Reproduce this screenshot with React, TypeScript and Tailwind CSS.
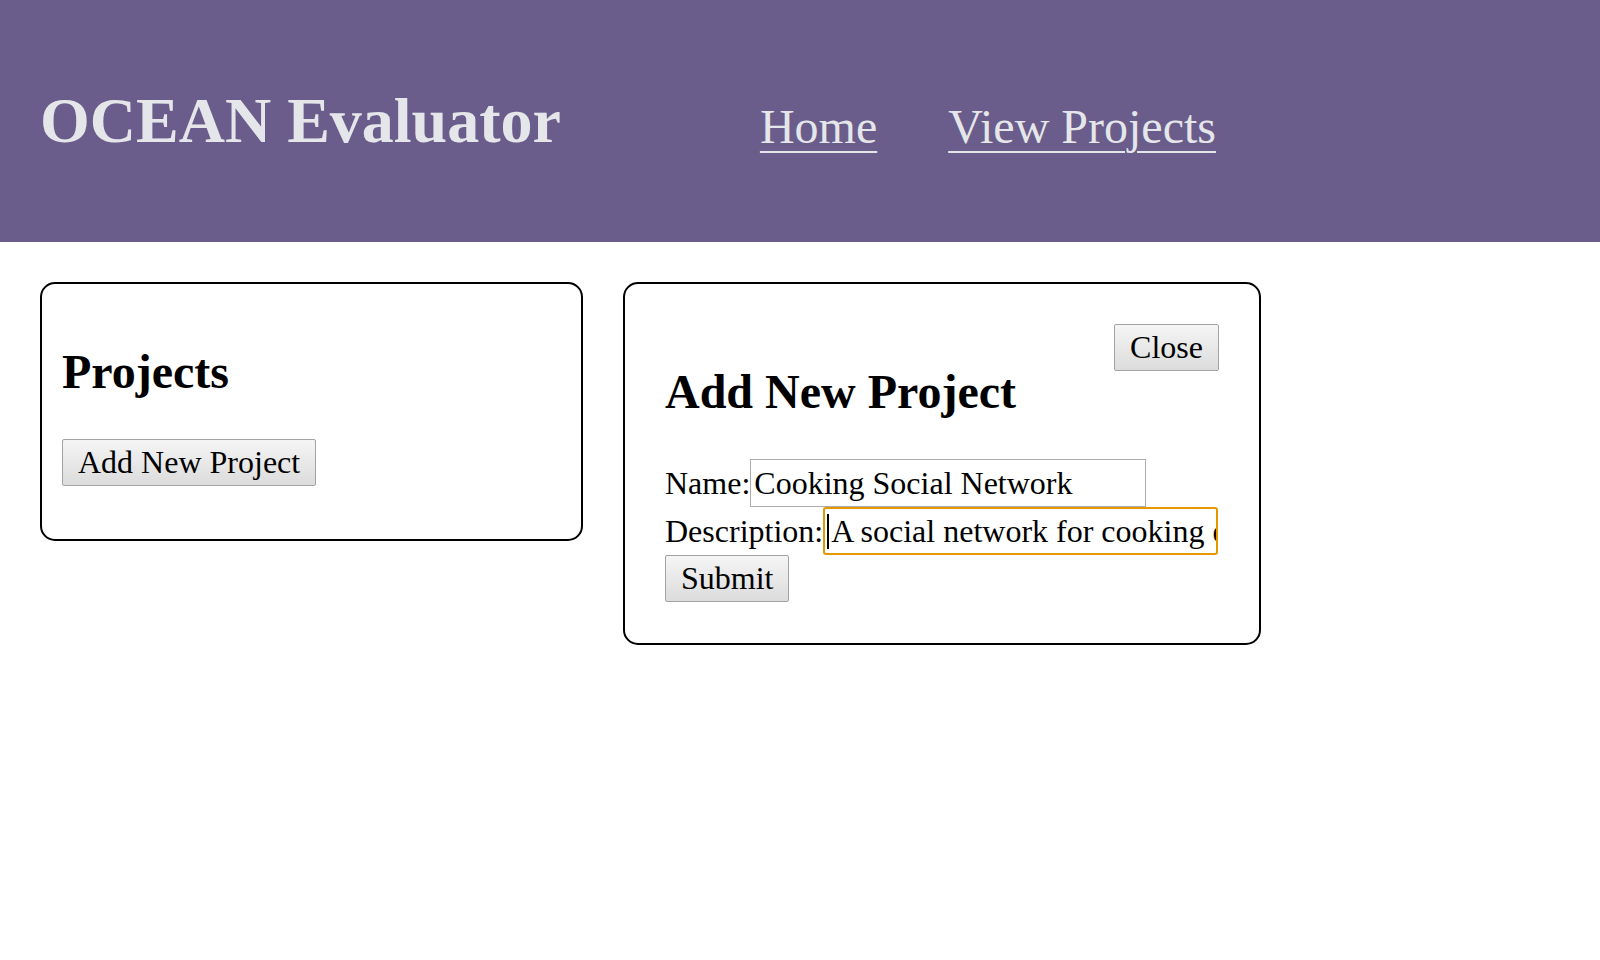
const btn =
  "border border-[#a3a3a3] rounded-[2px] bg-gradient-to-b from-[#f5f5f5] to-[#dcdcdc] px-[15px] py-[4px] leading-[normal] text-black";

const App = () => {
  return (
    <div className="min-h-screen bg-white text-[32px] leading-[normal] text-black font-['Liberation_Serif','Times_New_Roman',serif]">
      <header className="flex items-center h-[242px] px-[40px] bg-[#6a5d8c]">
        <h1 className="text-[64px] font-bold text-[#e5e6e9]">OCEAN Evaluator</h1>
        <nav className="flex gap-[71px] ml-[199px] pt-[10px] text-[48px] text-[#e5e6e9]">
          <a href="#" className="underline underline-offset-[8px] decoration-2">
            Home
          </a>
          <a href="#" className="underline underline-offset-[8px] decoration-2">
            View Projects
          </a>
        </nav>
      </header>

      <main className="flex items-start gap-[40px] p-[40px]">
        <section className="w-[543px] p-[20px] border-2 border-black rounded-[15px]">
          <h2 className="my-[40px] text-[48px] font-bold">Projects</h2>
          <div className="mb-[33px]">
            <button className={btn}>Add New Project</button>
          </div>
        </section>

        <section className="w-[638px] p-[40px] pb-[41px] border-2 border-black rounded-[15px]">
          <button className={btn + " float-right"}>Close</button>
          <h2 className="mt-[40px] mb-[40px] text-[48px] font-bold">Add New Project</h2>
          <div className="whitespace-nowrap">
            <label>Name:</label>
            <input
              readOnly
              value="Cooking Social Network"
              className="w-[396px] h-[48px] px-[3px] border border-[#adadad] bg-white outline-none"
            />
          </div>
          <div className="whitespace-nowrap">
            <label>Description:</label>
            <span className="relative inline-block">
              <input
                readOnly
                value="A social network for cooking enthusiasts"
                className="w-[395px] h-[48px] pl-[6px] pr-0 border-2 border-[#e59700] rounded-[3px] bg-white outline-none"
              />
              <span className="absolute left-[4px] top-[7px] h-[35px] w-[2px] bg-black" />
            </span>
          </div>
          <button className={btn}>Submit</button>
        </section>
      </main>
    </div>
  );
};

export default App;
